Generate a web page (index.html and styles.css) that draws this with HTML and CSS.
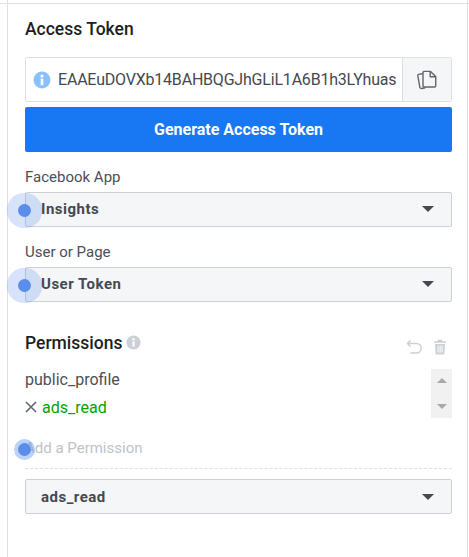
FILE: index.html
```html
<!DOCTYPE html>
<html lang="en">
<head>
    <meta charset="UTF-8">
    <meta name="viewport" content="width=device-width, initial-scale=1.0">
    <title>Access Token</title>
    <link rel="stylesheet" href="styles.css">
</head>
<body>
    <div class="frame">
        <div class="grip"></div>
        <div class="panel">
            <h2 class="title">Access Token</h2>

            <div class="token-row">
                <div class="token-field">
                    <svg class="info-icon" viewBox="0 0 18 18" width="18" height="18">
                        <circle cx="9" cy="9" r="8.5" fill="#8ac0fb"/>
                        <rect x="7.7" y="7.6" width="2.6" height="6.6" fill="#fff"/>
                        <circle cx="9" cy="5" r="1.6" fill="#fff"/>
                    </svg>
                    <span class="token-text">EAAEuDOVXb14BAHBQGJhGLiL1A6B1h3LYhuas</span>
                </div>
                <div class="copy-btn">
                    <svg viewBox="0 0 22 22" width="22" height="22" fill="none" stroke="#606770" stroke-width="1.4" stroke-linejoin="round">
                        <path d="M7.5 4.5 2.6 5.4a1 1 0 0 0-.8 1.2l2 11.6a1.6 1.6 0 0 0 1.9 1.3l3.6-.7"/>
                        <path d="M8 2.4h6.5l5.2 5.2v9.4a1 1 0 0 1-1 1H8a1 1 0 0 1-1-1V3.4a1 1 0 0 1 1-1z" fill="#f5f6f7"/>
                        <path d="M14.2 2.6v5.2h5.3"/>
                    </svg>
                </div>
            </div>
            <button class="generate-btn" type="button">Generate Access Token</button>

            <label class="field-label">Facebook App</label>
            <div class="select-box">
                <span>Insights</span>
                <i class="caret"></i>
                <span class="touch-dot"></span>
            </div>

            <label class="field-label">User or Page</label>
            <div class="select-box">
                <span>User Token</span>
                <i class="caret"></i>
                <span class="touch-dot"></span>
            </div>

            <div class="perm-head">
                <h2 class="title">Permissions</h2>
                <svg class="perm-info" viewBox="0 0 16 16" width="15" height="15">
                    <circle cx="8" cy="8" r="7.5" fill="#ccd0d5"/>
                    <rect x="6.9" y="6.8" width="2.2" height="5.6" fill="#fff"/>
                    <circle cx="8" cy="4.4" r="1.3" fill="#fff"/>
                </svg>
                <div class="perm-actions">
                    <svg viewBox="0 0 16 16" width="16" height="16" fill="none" stroke="#ccd0d5" stroke-width="1.5">
                        <path d="M4.5 1.5 1.5 4.5l3 3"/>
                        <path d="M1.5 4.5h9a4 4 0 0 1 0 9.5H4.5"/>
                    </svg>
                    <svg viewBox="0 0 14 16" width="14" height="16" fill="#ccd0d5">
                        <path d="M5 .8h4l.7 1.4H13v1.6H1V2.2h3.3z"/>
                        <path d="M2 5h10l-.6 9.6a1 1 0 0 1-1 .9H3.6a1 1 0 0 1-1-.9zM4.6 6.6v7h1v-7zm2 0v7h1v-7zm2 0v7h1v-7z" fill-rule="evenodd"/>
                    </svg>
                </div>
            </div>

            <div class="perm-list">
                <div class="perm-items">
                    <div class="perm-item">public_profile</div>
                    <div class="perm-item">
                        <svg class="remove-icon" viewBox="0 0 12 12" width="12" height="12" stroke="#606770" stroke-width="1.6" fill="none">
                            <path d="M1 1l10 10M11 1 1 11"/>
                        </svg>
                        <span class="perm-new">ads_read</span>
                    </div>
                </div>
                <div class="scroller">
                    <i class="arrow-up"></i>
                    <i class="arrow-down"></i>
                </div>
            </div>

            <div class="add-perm">
                Add a Permission
                <span class="touch-dot small"></span>
            </div>

            <div class="select-box last-select">
                <span>ads_read</span>
                <i class="caret"></i>
            </div>
        </div>
    </div>
</body>
</html>
```

FILE: styles.css
```css
* {
    box-sizing: border-box;
    margin: 0;
    padding: 0;
    font-family: 'Roboto', 'Liberation Sans', sans-serif;
}

html, body {
    height: 100%;
    overflow: hidden;
    background-color: #fff;
}

.frame {
    position: relative;
    height: 100%;
    padding-left: 7px;
    padding-right: 1px;
}

.frame::before {
    content: "";
    position: absolute;
    left: 0;
    right: 0;
    top: 3px;
    border-top: 1px solid #dddfe2;
}

.grip {
    position: absolute;
    left: 1px;
    top: 307px;
    width: 5px;
    height: 29px;
    background-image: radial-gradient(#d3d5d9 0.6px, transparent 0.7px);
    background-size: 2px 2px;
}

.panel {
    height: 100%;
    border-left: 1px solid #dddfe2;
    border-right: 1px solid #dddfe2;
    padding: 19px 15px 0 17px;
}

.title {
    font-size: 17.5px;
    font-weight: 500;
    line-height: 20px;
    color: #1c1e21;
}

.token-row {
    display: flex;
    height: 45px;
    margin-top: 18px;
    border: 1px solid #dddfe2;
    border-radius: 2px;
}

.token-field {
    flex: 1;
    min-width: 0;
    display: flex;
    align-items: center;
    padding: 0 6px 0 7px;
}

.info-icon {
    flex: none;
    margin-right: 7px;
}

.token-text {
    overflow: hidden;
    white-space: nowrap;
    font-size: 16px;
    letter-spacing: -0.2px;
    color: #444950;
}

.copy-btn {
    flex: none;
    width: 49px;
    display: flex;
    align-items: center;
    justify-content: center;
    background-color: #f5f6f7;
    border-left: 1px solid #dddfe2;
}

.generate-btn {
    display: block;
    width: 100%;
    height: 45px;
    margin-top: 5px;
    background-color: #1877f2;
    color: #fff;
    border: none;
    border-radius: 2px;
    font-size: 16px;
    font-weight: 700;
}

.field-label {
    display: block;
    font-size: 15px;
    line-height: 18px;
    margin-top: 16px;
    margin-bottom: 6px;
    color: #4b4f56;
}

.select-box {
    position: relative;
    display: flex;
    align-items: center;
    justify-content: space-between;
    height: 35px;
    padding: 0 17px 1px 15px;
    background-color: #f5f6f7;
    border: 1px solid #ccd0d5;
    border-radius: 2px;
    font-size: 15px;
    font-weight: 700;
    letter-spacing: 0.5px;
    color: #444950;
}

.caret {
    width: 0;
    height: 0;
    border-left: 6.5px solid transparent;
    border-right: 6.5px solid transparent;
    border-top: 6px solid #444950;
}

.touch-dot {
    position: absolute;
    left: -2px;
    top: 17px;
    width: 13px;
    height: 13px;
    margin: -6px 0 0 -6px;
    border-radius: 50%;
    background-color: #5a8eea;
    box-shadow: 0 0 0 11px rgba(90, 142, 234, 0.25);
}

.touch-dot.small {
    left: -1px;
    top: 11px;
    box-shadow: 0 0 0 4px rgba(90, 142, 234, 0.4);
}

.perm-head {
    position: relative;
    display: flex;
    align-items: center;
    margin-top: 31px;
}

.perm-info {
    margin-left: 4px;
    margin-top: -2px;
}

.perm-actions {
    position: absolute;
    right: 5px;
    top: 6px;
    display: flex;
    gap: 11px;
}

.perm-list {
    display: flex;
    justify-content: space-between;
    margin-top: 16px;
    height: 49px;
}

.perm-item {
    display: flex;
    align-items: center;
    height: 28px;
    font-size: 16px;
    color: #4b4f56;
}

.perm-item:first-child {
    height: 20px;
    margin-bottom: 4px;
}

.remove-icon {
    margin-right: 5px;
}

.perm-new {
    color: #00a400;
}

.scroller {
    width: 21px;
    display: flex;
    flex-direction: column;
    align-items: center;
    justify-content: space-between;
    padding: 9px 0;
    background-color: #f1f1f1;
}

.arrow-up {
    border-left: 5px solid transparent;
    border-right: 5px solid transparent;
    border-bottom: 5px solid #a8a8a8;
}

.arrow-down {
    border-left: 5px solid transparent;
    border-right: 5px solid transparent;
    border-top: 5px solid #a8a8a8;
}

.add-perm {
    position: relative;
    height: 31px;
    margin-top: 20px;
    padding-top: 1px;
    line-height: 18px;
    border-bottom: 1px dashed #dddfe2;
    font-size: 15px;
    color: #bec3c9;
}

.last-select {
    margin-top: 10px;
    padding-bottom: 0;
}
```
